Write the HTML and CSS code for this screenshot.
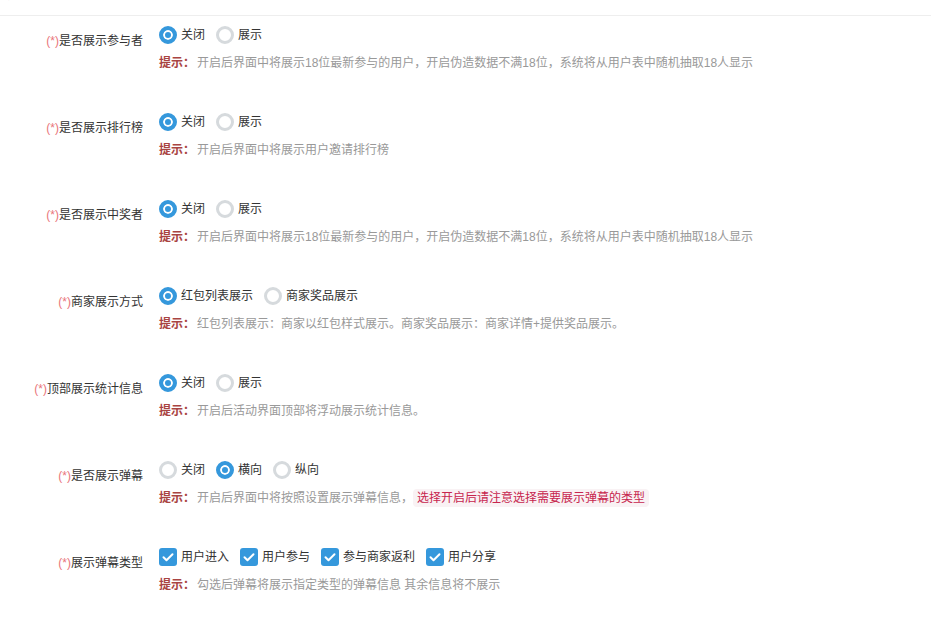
FILE: index.html
```html
<!DOCTYPE html>
<html>
  <head>
    <meta charset="utf-8">
    <title>功能设置</title>
    <link rel="stylesheet" href="styles.css">
  </head>
  <body>
    <div class="page-head">
      <h3 class="page-title">功能设置</h3>
    </div>

    <div class="form">
      <!-- 参与者 -->
      <div class="form-row">
        <label class="row-label"><span class="req">(*)</span>是否展示参与者</label>
        <div class="row-ctrl">
          <div class="opts">
            <span class="opt"><i class="radio on"></i>关闭</span>
            <span class="opt"><i class="radio"></i>展示</span>
          </div>
          <p class="hint"><b>提示：</b>开启后界面中将展示18位最新参与的用户，开启伪造数据不满18位，系统将从用户表中随机抽取18人显示</p>
        </div>
      </div>

      <!-- 排行榜 -->
      <div class="form-row">
        <label class="row-label"><span class="req">(*)</span>是否展示排行榜</label>
        <div class="row-ctrl">
          <div class="opts">
            <span class="opt"><i class="radio on"></i>关闭</span>
            <span class="opt"><i class="radio"></i>展示</span>
          </div>
          <p class="hint"><b>提示：</b>开启后界面中将展示用户邀请排行榜</p>
        </div>
      </div>

      <!-- 中奖者 -->
      <div class="form-row">
        <label class="row-label"><span class="req">(*)</span>是否展示中奖者</label>
        <div class="row-ctrl">
          <div class="opts">
            <span class="opt"><i class="radio on"></i>关闭</span>
            <span class="opt"><i class="radio"></i>展示</span>
          </div>
          <p class="hint"><b>提示：</b>开启后界面中将展示18位最新参与的用户，开启伪造数据不满18位，系统将从用户表中随机抽取18人显示</p>
        </div>
      </div>

      <!-- 商家 -->
      <div class="form-row">
        <label class="row-label"><span class="req">(*)</span>商家展示方式</label>
        <div class="row-ctrl">
          <div class="opts">
            <span class="opt"><i class="radio on"></i>红包列表展示</span>
            <span class="opt"><i class="radio"></i>商家奖品展示</span>
          </div>
          <p class="hint"><b>提示：</b>红包列表展示：商家以红包样式展示。商家奖品展示：商家详情+提供奖品展示。</p>
        </div>
      </div>

      <!-- 统计 -->
      <div class="form-row">
        <label class="row-label"><span class="req">(*)</span>顶部展示统计信息</label>
        <div class="row-ctrl">
          <div class="opts">
            <span class="opt"><i class="radio on"></i>关闭</span>
            <span class="opt"><i class="radio"></i>展示</span>
          </div>
          <p class="hint"><b>提示：</b>开启后活动界面顶部将浮动展示统计信息。</p>
        </div>
      </div>

      <!-- 弹幕 -->
      <div class="form-row">
        <label class="row-label"><span class="req">(*)</span>是否展示弹幕</label>
        <div class="row-ctrl">
          <div class="opts">
            <span class="opt"><i class="radio"></i>关闭</span>
            <span class="opt"><i class="radio on"></i>横向</span>
            <span class="opt"><i class="radio"></i>纵向</span>
          </div>
          <p class="hint"><b>提示：</b>开启后界面中将按照设置展示弹幕信息，<code>选择开启后请注意选择需要展示弹幕的类型</code></p>
        </div>
      </div>

      <!-- 弹幕类型 -->
      <div class="form-row">
        <label class="row-label"><span class="req">(*)</span>展示弹幕类型</label>
        <div class="row-ctrl">
          <div class="opts">
            <span class="opt"><i class="check"><svg viewBox="0 0 18 18"><path d="M4.5 9.2l3 3 6-6"/></svg></i>用户进入</span>
            <span class="opt"><i class="check"><svg viewBox="0 0 18 18"><path d="M4.5 9.2l3 3 6-6"/></svg></i>用户参与</span>
            <span class="opt"><i class="check"><svg viewBox="0 0 18 18"><path d="M4.5 9.2l3 3 6-6"/></svg></i>参与商家返利</span>
            <span class="opt"><i class="check"><svg viewBox="0 0 18 18"><path d="M4.5 9.2l3 3 6-6"/></svg></i>用户分享</span>
          </div>
          <p class="hint"><b>提示：</b>勾选后弹幕将展示指定类型的弹幕信息 其余信息将不展示</p>
        </div>
      </div>
    </div>
  </body>
</html>
```

FILE: styles.css
```css
body{
  margin: 0;
  background: #fff;
  color: #333;
  font-family: "Liberation Sans", "Noto Sans CJK SC", sans-serif;
  font-size: 12px;
}

/**** 标题 ****/
.page-head{
  height: 15px;
  border-bottom: 1px solid #eee;
  overflow: hidden;
}
.page-title{
  margin: -16px 0 0 3px;
  font-size: 16px;
  line-height: 18px;
  font-weight: normal;
  color: #333;
}

/**** 表单 ****/
.form{
  padding-top: 9px;
}
.form-row{
  display: flex;
  margin-bottom: 39px;
}
.row-label{
  width: 143px;
  padding-top: 6px;
  line-height: 20px;
  text-align: right;
  color: #333;
}
.req{
  color: #e9757a;
}
.row-ctrl{
  margin-left: 16px;
}
.opts{
  display: flex;
  height: 20px;
  align-items: center;
}
.opt{
  display: flex;
  align-items: center;
  margin-right: 11px;
  line-height: 20px;
}
.opt i{
  margin-right: 4px;
}

/** 单选 **/
.radio{
  box-sizing: border-box;
  width: 18px;
  height: 18px;
  border-radius: 50%;
  border: 3px solid #d6dadd;
  background: #fff;
}
.radio.on{
  border: 4px solid #3598dc;
  background: #3598dc;
  box-shadow: inset 0 0 0 2px #fff;
}

/** 多选 **/
.check{
  width: 18px;
  height: 18px;
  border-radius: 3px;
  background: #3598dc;
}
.check svg{
  display: block;
  width: 18px;
  height: 18px;
  fill: none;
  stroke: #fff;
  stroke-width: 2;
  stroke-linecap: round;
  stroke-linejoin: round;
}

/** 提示 **/
.hint{
  margin: 8px 0 0;
  line-height: 20px;
  color: #999;
}
.hint b{
  color: #a94442;
  margin-right: 2px;
}
.hint code{
  font-family: inherit;
  font-size: 12px;
  padding: 2px 4px;
  color: #c7254e;
  background: #f9f2f4;
  border-radius: 4px;
}
```
